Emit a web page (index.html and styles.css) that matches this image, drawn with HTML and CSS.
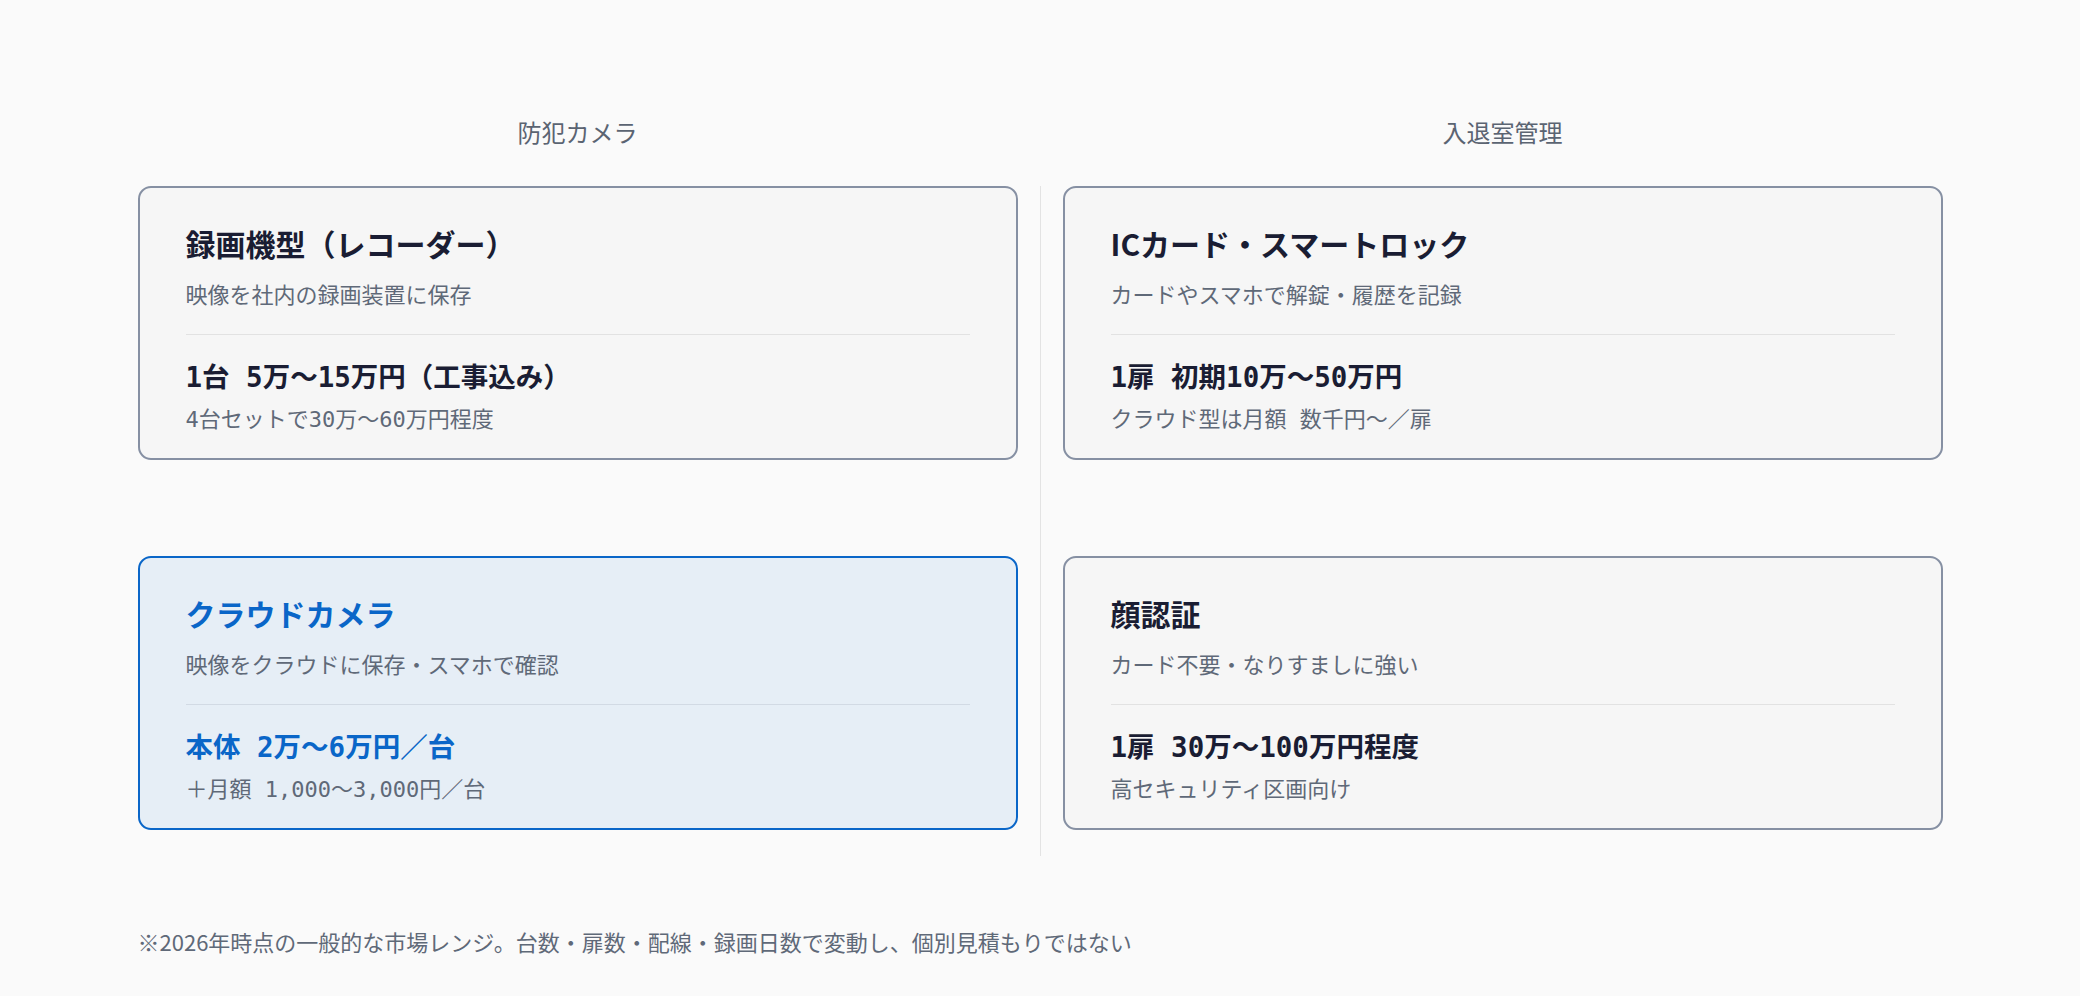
FILE: index.html
```html
<!DOCTYPE html>
<html lang="ja">
<head>
<meta charset="utf-8">
<title>防犯カメラ・入退室管理 費用目安</title>
<link rel="stylesheet" href="styles.css">
</head>
<body>
<main class="page">
  <div class="heads">
    <div class="head">防犯カメラ</div>
    <div></div>
    <div class="head">入退室管理</div>
  </div>
  <div class="grid">
    <div class="col">
      <section class="card">
        <h2 class="title">録画機型（レコーダー）</h2>
        <p class="desc">映像を社内の録画装置に保存</p>
        <hr class="rule">
        <p class="price">1台&nbsp;5万〜15万円（工事込み）</p>
        <p class="note">4台セットで30万〜60万円程度</p>
      </section>
      <section class="card card-accent">
        <h2 class="title">クラウドカメラ</h2>
        <p class="desc">映像をクラウドに保存・スマホで確認</p>
        <hr class="rule">
        <p class="price">本体&nbsp;2万〜6万円／台</p>
        <p class="note">＋月額 1,000〜3,000円／台</p>
      </section>
    </div>
    <div class="vline"></div>
    <div class="col">
      <section class="card">
        <h2 class="title">ICカード・スマートロック</h2>
        <p class="desc">カードやスマホで解錠・履歴を記録</p>
        <hr class="rule">
        <p class="price">1扉&nbsp;初期10万〜50万円</p>
        <p class="note">クラウド型は月額&nbsp;数千円〜／扉</p>
      </section>
      <section class="card">
        <h2 class="title">顔認証</h2>
        <p class="desc">カード不要・なりすましに強い</p>
        <hr class="rule">
        <p class="price">1扉&nbsp;30万〜100万円程度</p>
        <p class="note">高セキュリティ区画向け</p>
      </section>
    </div>
  </div>
  <p class="foot">※2026年時点の一般的な市場レンジ。台数・扉数・配線・録画日数で変動し、個別見積もりではない</p>
</main>
</body>
</html>
```
FILE: styles.css
```css
html, body {
  margin: 0;
  padding: 0;
  background: #fafafa;
}
body {
  font-family: "Noto Sans CJK JP", "Noto Sans", sans-serif;
  color: #1b1f36;
}
.page {
  width: 1805px;
  margin: 0 auto;
  padding-top: 116px;
}
.heads, .grid {
  display: grid;
  grid-template-columns: 1fr 1px 1fr;
  column-gap: 22px;
}
.head {
  text-align: center;
  font-size: 24px;
  line-height: 32px;
  color: #5b6472;
}
.heads {
  margin-bottom: 38px;
}
.col {
  display: flex;
  flex-direction: column;
  gap: 96px;
  padding-bottom: 26px;
}
.vline {
  background: #e3e3e3;
}
.card {
  border: 2px solid #8690a3;
  border-radius: 13px;
  background: #f6f6f6;
  padding: 37px 46px 23px;
}
.title {
  margin: 0;
  font-size: 30px;
  line-height: 36px;
  font-weight: 700;
  color: #1a1d33;
}
.desc {
  margin: 17px 0 0;
  font-size: 22px;
  line-height: 30px;
  color: #5f6978;
}
.rule {
  margin: 26px 0 25px;
  border: 0;
  height: 1px;
  background: #e2e2e2;
}
.price {
  margin: 0;
  font-family: "DejaVu Sans Mono", "Noto Sans CJK JP", monospace;
  font-size: 27.5px;
  line-height: 34px;
  font-weight: 700;
  color: #1a1d33;
}
.note {
  margin: 11px 0 0;
  font-family: "DejaVu Sans Mono", "Noto Sans CJK JP", monospace;
  font-size: 22px;
  line-height: 30px;
  color: #5f6978;
}
.card-accent {
  border-color: #0a66c8;
  background: #e6eef6;
}
.card-accent .title,
.card-accent .price {
  color: #0a66c8;
}
.card-accent .rule {
  background: #d2dae4;
}
.foot {
  margin: 70px 0 0;
  font-size: 22px;
  line-height: 30px;
  color: #5f6978;
}
```
